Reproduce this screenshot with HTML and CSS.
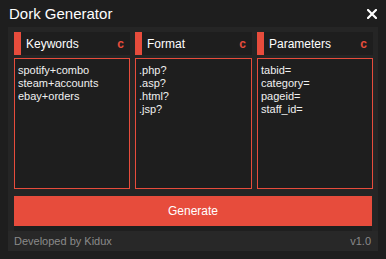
FILE: index.html
```html
<!DOCTYPE html>
<html lang="en">
<head>
    <meta charset="UTF-8">
    <meta name="viewport" content="width=device-width, initial-scale=1.0">
    <title>Dork Generator</title>
    <link rel="stylesheet" href="styles.css">
</head>
<body>
    <div class="titlebar">
        <span class="title">Dork Generator</span>
        <button class="close-btn" title="Close">
            <svg width="10" height="10" viewBox="0 0 10 10">
                <path d="M1 1 L9 9 M9 1 L1 9" stroke="#fff" stroke-width="2.2" stroke-linecap="square"/>
            </svg>
        </button>
    </div>
    <div class="panel">
        <div class="columns">
            <div class="column">
                <div class="col-head">
                    <span class="bar"></span>
                    <span class="col-title">Keywords</span>
                    <span class="clear">c</span>
                </div>
                <textarea class="box" spellcheck="false">spotify+combo
steam+accounts
ebay+orders</textarea>
            </div>
            <div class="column">
                <div class="col-head">
                    <span class="bar"></span>
                    <span class="col-title">Format</span>
                    <span class="clear">c</span>
                </div>
                <textarea class="box" spellcheck="false">.php?
.asp?
.html?
.jsp?</textarea>
            </div>
            <div class="column">
                <div class="col-head">
                    <span class="bar"></span>
                    <span class="col-title">Parameters</span>
                    <span class="clear">c</span>
                </div>
                <textarea class="box" spellcheck="false">tabid=
category=
pageid=
staff_id=</textarea>
            </div>
        </div>
        <button class="generate">Generate</button>
        <div class="separator"></div>
        <div class="footer">
            <span>Developed by Kidux</span>
            <span>v1.0</span>
        </div>
    </div>
</body>
</html>
```

FILE: styles.css
```css
body {
    margin: 0;
    background: #1e1e1e;
    font-family: "Liberation Sans", Arial, sans-serif;
    color: #fff;
}
.titlebar {
    height: 27px;
    display: flex;
    align-items: center;
    justify-content: space-between;
    padding: 0 8px 0 9px;
}
.title {
    font-size: 15px;
    margin-top: -1px;
}
.close-btn {
    background: none;
    border: none;
    padding: 0;
    width: 12px;
    height: 12px;
    display: flex;
    align-items: center;
    justify-content: center;
    cursor: pointer;
}
.panel {
    margin: 0 8px;
    background: #252525;
    padding: 5px 6px 0;
}
.columns {
    display: grid;
    grid-template-columns: 116px 117px 116px;
    gap: 5px;
}
.column {
    display: flex;
    flex-direction: column;
    gap: 3px;
}
.col-head {
    height: 23px;
    background: #1e1e1e;
    display: flex;
    align-items: center;
}
.bar {
    width: 7px;
    align-self: stretch;
    background: #e74c3c;
}
.col-title {
    flex: 1;
    font-size: 12px;
    padding-left: 5px;
}
.clear {
    color: #e74c3c;
    font-weight: bold;
    font-size: 12px;
    padding-right: 6px;
    cursor: pointer;
}
.box {
    height: 131px;
    box-sizing: border-box;
    margin: 0;
    resize: none;
    outline: none;
    background: #1e1e1e;
    border: 1px solid #e74c3c;
    color: #f0f0f0;
    font-family: "Liberation Sans", Arial, sans-serif;
    font-size: 11px;
    line-height: 13px;
    padding: 5px 3px;
    overflow: hidden;
}
.generate {
    display: block;
    width: 100%;
    height: 30px;
    margin-top: 7px;
    border: none;
    background: #e74c3c;
    color: #fff;
    font-family: "Liberation Sans", Arial, sans-serif;
    font-size: 12px;
    cursor: pointer;
}
.separator {
    height: 5px;
    background: #1f1f1f;
}
.footer {
    height: 20px;
    margin: 0 -6px;
    padding: 0 7px 0 6px;
    background: #282828;
    display: flex;
    align-items: center;
    justify-content: space-between;
    font-size: 11px;
    color: #8a8a8a;
}
```
